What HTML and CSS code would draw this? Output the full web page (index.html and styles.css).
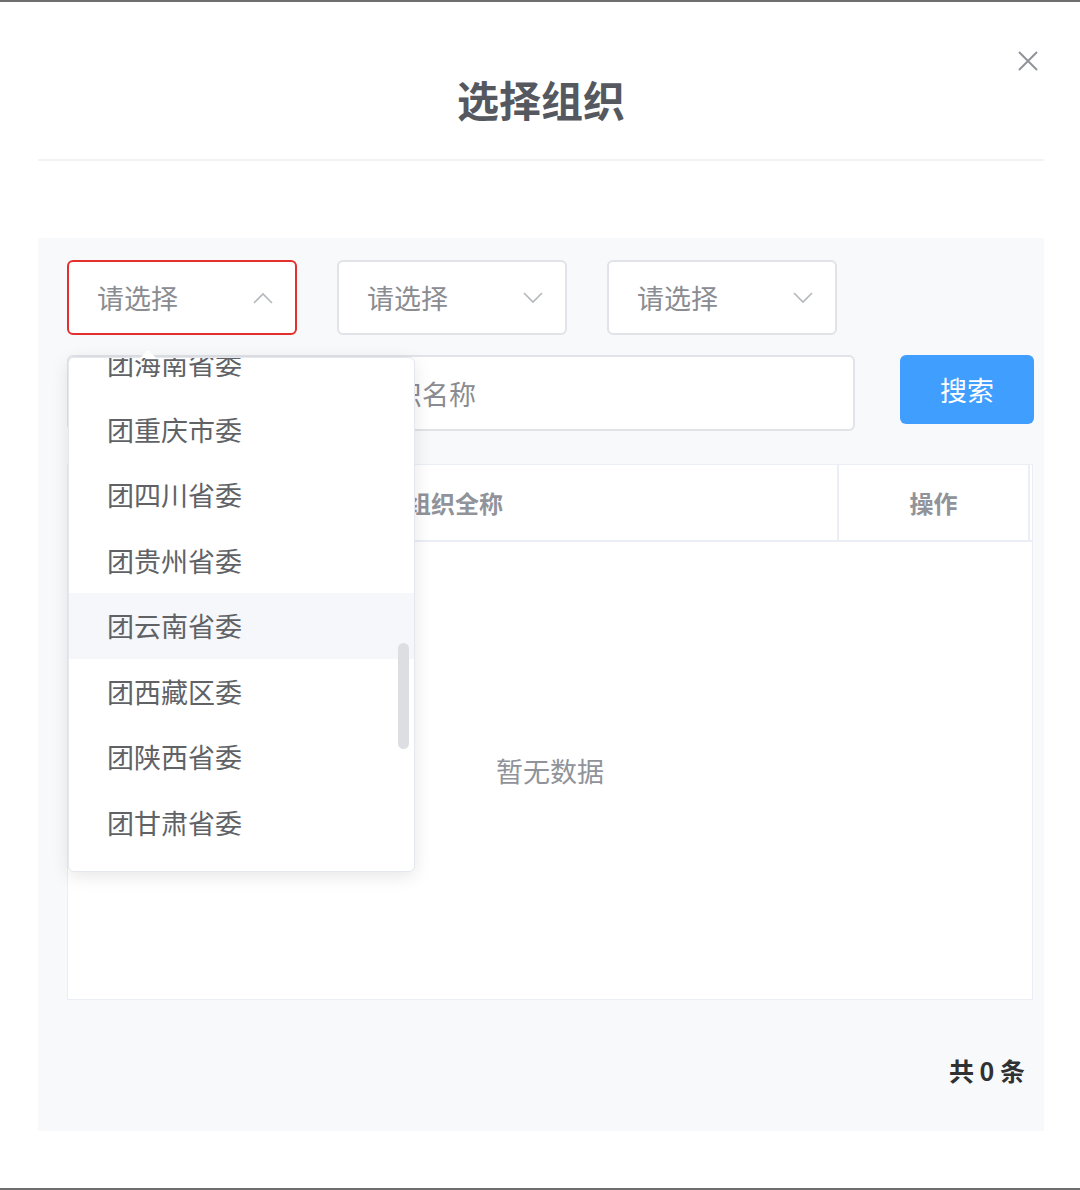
FILE: index.html
```html
<!DOCTYPE html>
<html lang="zh-CN">

<head>
    <meta charset="UTF-8">
    <meta name="viewport" content="width=device-width, initial-scale=1.0">
    <title>选择组织</title>
    <link rel="stylesheet" href="styles.css">
</head>

<body>
    <div class="frame">
        <div class="dialog">
            <div class="dialog-header">
                <h2 class="dialog-title">选择组织</h2>
                <span class="close">
                    <svg width="22" height="22" viewBox="0 0 22 22">
                        <path d="M2 2 L20 20 M20 2 L2 20" stroke="#909399" stroke-width="2" fill="none" />
                    </svg>
                </span>
            </div>

            <div class="panel">
                <div class="selects">
                    <div class="select-wrap">
                        <div class="select is-open">
                            <span>请选择</span>
                            <svg class="arrow" width="20" height="12" viewBox="0 0 20 12">
                                <path d="M1 11 L10 2 L19 11" stroke="#b4b7bd" stroke-width="1.6" fill="none" />
                            </svg>
                        </div>
                        <!-- 下拉列表 -->
                        <div class="dropdown">
                            <ul class="options">
                                <li>团海南省委</li>
                                <li>团重庆市委</li>
                                <li>团四川省委</li>
                                <li>团贵州省委</li>
                                <li class="hover">团云南省委</li>
                                <li>团西藏区委</li>
                                <li>团陕西省委</li>
                                <li>团甘肃省委</li>
                            </ul>
                            <span class="scroll-thumb"></span>
                        </div>
                    </div>
                    <div class="select-wrap">
                        <div class="select">
                            <span>请选择</span>
                            <svg class="arrow" width="20" height="12" viewBox="0 0 20 12">
                                <path d="M1 1 L10 10 L19 1" stroke="#b4b7bd" stroke-width="1.6" fill="none" />
                            </svg>
                        </div>
                    </div>
                    <div class="select-wrap">
                        <div class="select">
                            <span>请选择</span>
                            <svg class="arrow" width="20" height="12" viewBox="0 0 20 12">
                                <path d="M1 1 L10 10 L19 1" stroke="#b4b7bd" stroke-width="1.6" fill="none" />
                            </svg>
                        </div>
                    </div>
                </div>

                <div class="search-row">
                    <div class="search-input">请输入您想要搜索的组织名称</div>
                    <button class="btn-search">搜索</button>
                </div>

                <div class="table">
                    <div class="thead">
                        <div class="th col-index"></div>
                        <div class="th col-name">组织全称</div>
                        <div class="th col-op">操作</div>
                        <div class="gutter"></div>
                    </div>
                    <div class="tbody">
                        <span class="empty">暂无数据</span>
                    </div>
                </div>

                <div class="pager">共 0 条</div>
            </div>
        </div>
    </div>
</body>

</html>
```

FILE: styles.css
```css
* {
    margin: 0;
    padding: 0;
    box-sizing: border-box;
    list-style-type: none;
}

body {
    font-family: "Noto Sans CJK SC", "Noto Sans", sans-serif;
    background: #fff;
}

.frame {
    height: 1190px;
    border-top: 2px solid #6e6e6e;
    border-bottom: 2px solid #6e6e6e;
}

.dialog {
    padding: 0 36px 0 38px;
}

.dialog-header {
    position: relative;
    height: 159px;
    padding-top: 73px;
    border-bottom: 2px solid #f1f2f4;
    text-align: center;
}

.dialog-title {
    font-size: 42px;
    line-height: 48px;
    font-weight: 700;
    color: #55595f;
}

.close {
    position: absolute;
    right: 5px;
    top: 48px;
    display: flex;
}

.panel {
    margin-top: 77px;
    height: 893px;
    background: #f8f9fb;
    padding: 22px 0 0 29px;
}

.selects {
    display: flex;
    gap: 40px;
}

.select-wrap {
    position: relative;
}

.select {
    width: 230px;
    height: 75px;
    border: 2px solid #e1e3e8;
    border-radius: 6px;
    background: #fff;
    display: flex;
    align-items: center;
    justify-content: space-between;
    padding: 0 22px 0 28px;
    font-size: 27px;
    color: #8a8c91;
}

.select.is-open {
    border-color: #e3302f;
}

.dropdown {
    position: absolute;
    z-index: 5;
    left: 1px;
    top: 97px;
    width: 347px;
    height: 515px;
    background: #fff;
    border: 1px solid #e4e7ed;
    border-radius: 6px;
    box-shadow: 0 4px 18px rgba(0, 0, 0, 0.1);
}

.dropdown::before {
    content: "";
    position: absolute;
    left: 71px;
    top: -8px;
    border-left: 8px solid transparent;
    border-right: 8px solid transparent;
    border-bottom: 8px solid #fff;
}

.options {
    height: 100%;
    overflow: hidden;
    border-radius: 6px;
}

/* 列表已向下滚动，第一项只露出下半截 */
.options li:first-child {
    margin-top: -27px;
}

.options li {
    height: 65.5px;
    line-height: 65.5px;
    padding-left: 38px;
    font-size: 27px;
    color: #606266;
}

.options li.hover {
    background: #f5f7fa;
}

.scroll-thumb {
    position: absolute;
    right: 5px;
    top: 285px;
    width: 11px;
    height: 106px;
    border-radius: 6px;
    background: #dcdee2;
}

.search-row {
    display: flex;
    align-items: flex-start;
    margin-top: 20px;
}

.search-input {
    width: 788px;
    height: 76px;
    border: 2px solid #e1e3e8;
    border-radius: 6px;
    background: #fff;
    display: flex;
    align-items: center;
    padding-left: 56px;
    font-size: 27px;
    color: #8a8c91;
    white-space: nowrap;
    overflow: hidden;
}

.btn-search {
    margin-left: 45px;
    width: 134px;
    height: 69px;
    border: none;
    border-radius: 6px;
    background: #409eff;
    color: #fff;
    font-family: inherit;
    font-size: 27px;
}

.table {
    margin-top: 33px;
    width: 966px;
    height: 536px;
    border: 1px solid #ebeef5;
    background: #fff;
    display: flex;
    flex-direction: column;
}

.thead {
    display: flex;
    height: 77px;
    border-bottom: 2px solid #ebeef5;
}

.th {
    display: flex;
    align-items: center;
    font-size: 24px;
    font-weight: 700;
    color: #909399;
}

.col-index {
    width: 319px;
}

.col-name {
    width: 450px;
    padding-left: 20px;
}

.col-op {
    flex: 1;
    justify-content: center;
    border-left: 2px solid #ebeef5;
    border-right: 2px solid #ebeef5;
}

.gutter {
    width: 2px;
}

.tbody {
    flex: 1;
    display: flex;
    align-items: center;
    justify-content: center;
}

.empty {
    font-size: 27px;
    color: #909399;
}

.pager {
    margin-top: 52px;
    width: 958px;
    text-align: right;
    font-size: 25px;
    font-weight: 700;
    color: #303133;
}
```
